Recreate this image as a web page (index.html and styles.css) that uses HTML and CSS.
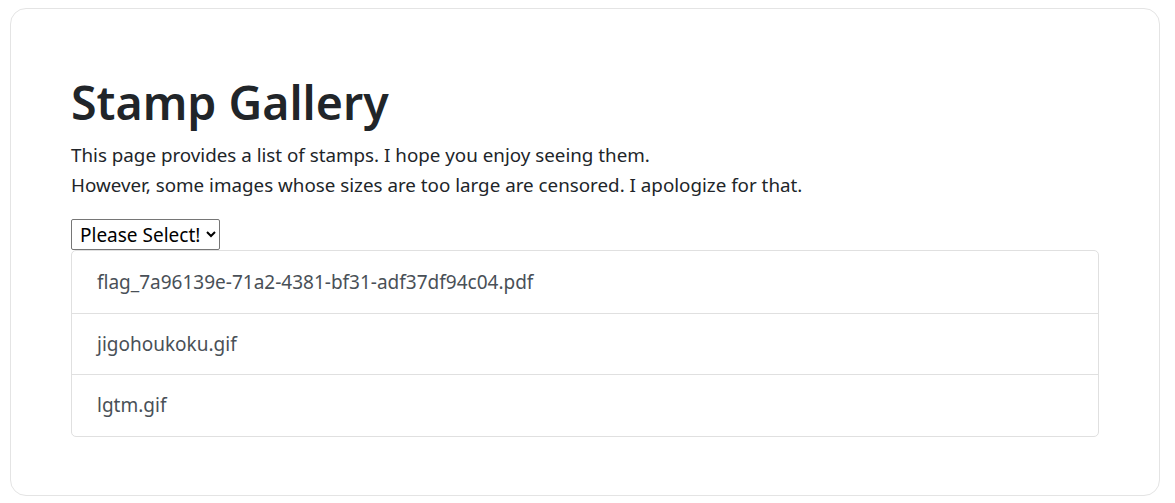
FILE: index.html
```html
<!DOCTYPE html>
<html lang="en">
<head>
<meta charset="utf-8">
<title>Stamp Gallery</title>
<link rel="stylesheet" href="styles.css">
</head>
<body>
<div class="frame">
  <main class="card">
    <h1 class="title">Stamp Gallery</h1>
    <p class="lead">This page provides a list of stamps. I hope you enjoy seeing them.<br>However, some images whose sizes are too large are censored. I apologize for that.</p>
    <div class="picker">
      <select class="select">
        <option>Please Select!</option>
      </select>
    </div>
    <ul class="list">
      <li class="item">flag_7a96139e-71a2-4381-bf31-adf37df94c04.pdf</li>
      <li class="item">jigohoukoku.gif</li>
      <li class="item">lgtm.gif</li>
    </ul>
  </main>
</div>
</body>
</html>
```

FILE: styles.css
```css
html, body {
  margin: 0;
  padding: 0;
  background: #ffffff;
}
body {
  font-family: "Noto Sans", "Open Sans", sans-serif;
  color: #212529;
}
.frame {
  padding: 8px 15px 7px 10px;
}
.card {
  box-sizing: border-box;
  height: 488px;
  border: 1px solid #e4e4e4;
  border-radius: 16px;
  padding: 66px 60px 0 60px;
}
.title {
  margin: 0 0 11px 0;
  font-size: 46.5px;
  font-weight: 600;
  line-height: 54px;
  color: #212529;
}
.lead {
  margin: 0 0 19px 0;
  font-size: 18.8px;
  line-height: 30px;
  color: #212529;
}
.picker {
  display: flex;
}
.select {
  box-sizing: border-box;
  font-family: "Noto Sans", "Open Sans", sans-serif;
  font-size: 19px;
  height: 31px;
  padding: 0 2px 0 4px;
  border: 1px solid #767676;
  border-radius: 2px;
  background: #fff;
  color: #000;
}
.list {
  list-style: none;
  margin: 0;
  padding: 0;
  border: 1px solid #e0e0e0;
  border-radius: 5px;
}
.item {
  height: 61.5px;
  box-sizing: border-box;
  padding: 0 25px;
  display: flex;
  align-items: center;
  font-size: 19px;
  color: #495057;
  border-top: 1px solid #e0e0e0;
}
.item:first-child {
  border-top: none;
}
```
